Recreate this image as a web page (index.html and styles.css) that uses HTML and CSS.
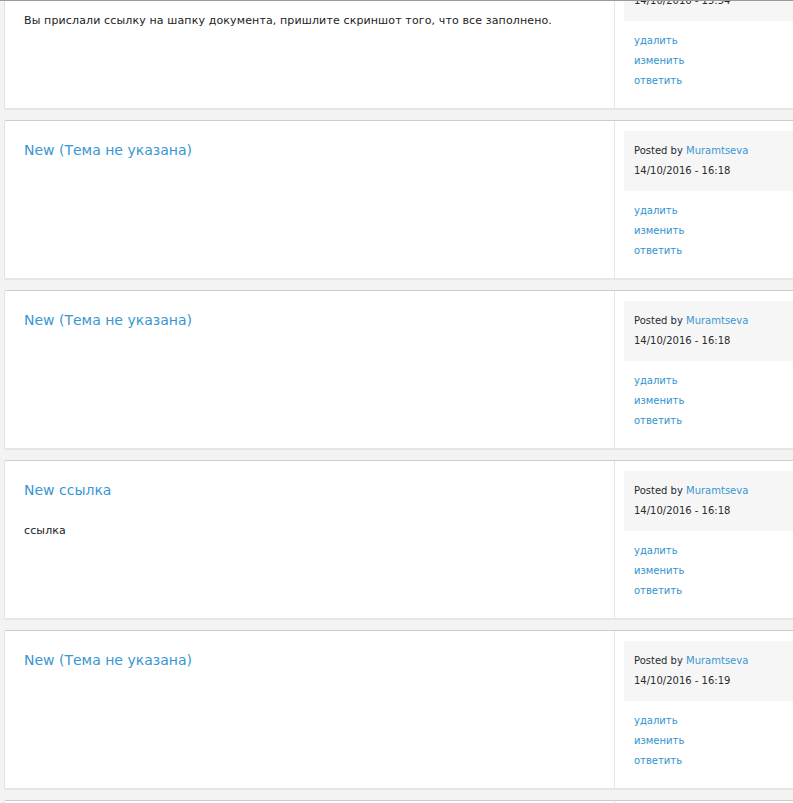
FILE: index.html
```html
<!DOCTYPE html>
<html lang="ru">
<head>
<meta charset="utf-8">
<title>Комментарии</title>
<link rel="stylesheet" href="styles.css">
</head>
<body>
<div class="viewport">
  <div class="list">
    <div class="card">
      <div class="main">
        <div class="title"></div>
        <p class="text">Вы прислали ссылку на шапку документа, пришлите скриншот того, что все заполнено.</p>
      </div>
      <div class="side">
        <div class="meta">
          <div class="line">Posted by <a href="#">Muramtseva</a></div>
          <div class="line">14/10/2016 - 15:54</div>
        </div>
        <ul class="links">
          <li><a href="#">удалить</a></li>
          <li><a href="#">изменить</a></li>
          <li><a href="#">ответить</a></li>
        </ul>
      </div>
    </div>
    <div class="card">
      <div class="main">
        <h3 class="title"><a href="#">New (Тема не указана)</a></h3>
      </div>
      <div class="side">
        <div class="meta">
          <div class="line">Posted by <a href="#">Muramtseva</a></div>
          <div class="line">14/10/2016 - 16:18</div>
        </div>
        <ul class="links">
          <li><a href="#">удалить</a></li>
          <li><a href="#">изменить</a></li>
          <li><a href="#">ответить</a></li>
        </ul>
      </div>
    </div>
    <div class="card">
      <div class="main">
        <h3 class="title"><a href="#">New (Тема не указана)</a></h3>
      </div>
      <div class="side">
        <div class="meta">
          <div class="line">Posted by <a href="#">Muramtseva</a></div>
          <div class="line">14/10/2016 - 16:18</div>
        </div>
        <ul class="links">
          <li><a href="#">удалить</a></li>
          <li><a href="#">изменить</a></li>
          <li><a href="#">ответить</a></li>
        </ul>
      </div>
    </div>
    <div class="card">
      <div class="main">
        <h3 class="title"><a href="#">New ссылка</a></h3>
        <p class="text">ссылка</p>
      </div>
      <div class="side">
        <div class="meta">
          <div class="line">Posted by <a href="#">Muramtseva</a></div>
          <div class="line">14/10/2016 - 16:18</div>
        </div>
        <ul class="links">
          <li><a href="#">удалить</a></li>
          <li><a href="#">изменить</a></li>
          <li><a href="#">ответить</a></li>
        </ul>
      </div>
    </div>
    <div class="card">
      <div class="main">
        <h3 class="title"><a href="#">New (Тема не указана)</a></h3>
      </div>
      <div class="side">
        <div class="meta">
          <div class="line">Posted by <a href="#">Muramtseva</a></div>
          <div class="line">14/10/2016 - 16:19</div>
        </div>
        <ul class="links">
          <li><a href="#">удалить</a></li>
          <li><a href="#">изменить</a></li>
          <li><a href="#">ответить</a></li>
        </ul>
      </div>
    </div>
    <div class="card">
      <div class="main">
        <h3 class="title"><a href="#">New (Тема не указана)</a></h3>
      </div>
      <div class="side"></div>
    </div>
  </div>
</div>
</body>
</html>
```
FILE: styles.css
```css
html, body {
  margin: 0;
  padding: 0;
  background: #f3f3f3;
}
body {
  font-family: "DejaVu Sans", "Liberation Sans", sans-serif;
  font-size: 11px;
  color: #333333;
  overflow: hidden;
}
.viewport {
  height: 802px;
  overflow: hidden;
  border-top: 1px solid #9a9a9a;
}
.list {
  margin-top: -51px;
  display: flex;
  flex-direction: column;
  gap: 10px;
  padding-left: 4px;
}
.card {
  box-sizing: border-box;
  height: 160px;
  display: flex;
  background: #ffffff;
  border-top: 1px solid #cccccc;
  border-left: 1px solid #e2e2e2;
  border-bottom: 2px solid #e6e6e6;
  border-radius: 2px 0 0 2px;
}
.main {
  width: 610px;
  flex: none;
  box-sizing: border-box;
  padding: 19px 19px 0 19px;
  border-right: 1px solid #e6e6e6;
}
.title {
  margin: 0;
  font-size: 14px;
  font-weight: normal;
  line-height: 20px;
  min-height: 20px;
}
.title a {
  color: #3897d3;
  text-decoration: none;
}
.text {
  margin: 21px 0 0;
  line-height: 20px;
  letter-spacing: 0.13px;
  color: #222222;
}
.side {
  flex: 1;
  padding: 10px 0 0 9px;
  font-size: 10px;
}
.meta {
  background: #f6f6f6;
  padding: 10px;
  line-height: 20px;
  color: #2a2a2a;
}
.meta a {
  color: #3897d3;
  text-decoration: none;
}
.links {
  list-style: none;
  margin: 10px 0 0;
  padding: 0 0 0 10px;
  line-height: 20px;
}
.links a {
  color: #2f92d0;
  text-decoration: none;
}
```
